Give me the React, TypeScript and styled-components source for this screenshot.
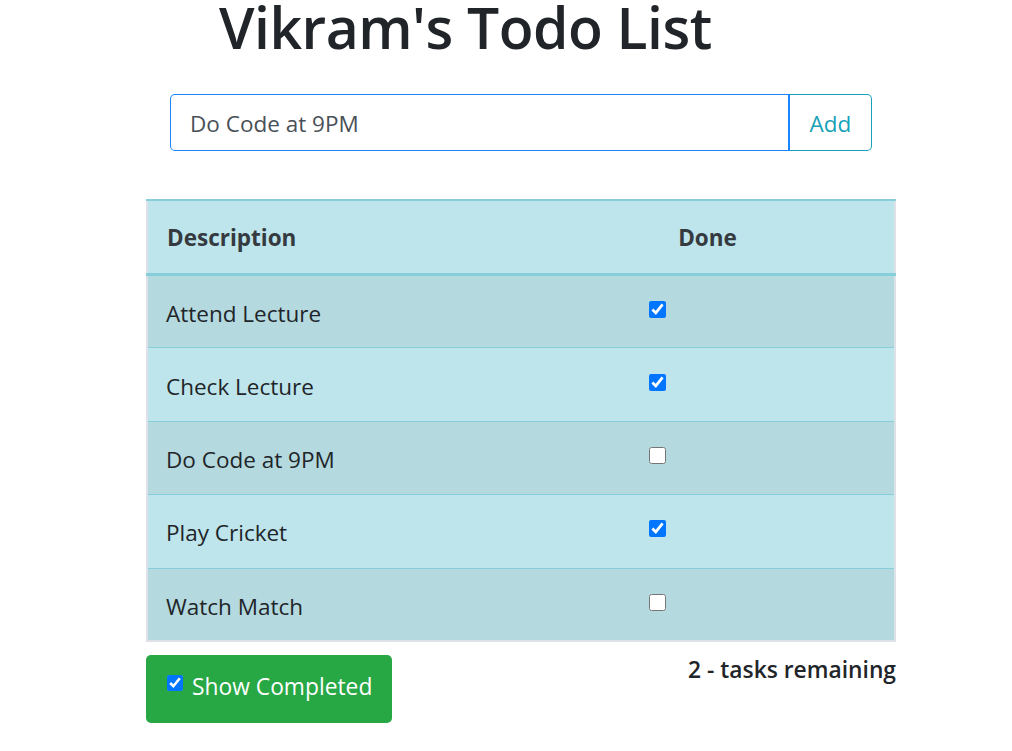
import React, { useState } from "react";
import styled, { createGlobalStyle } from "styled-components";

const Global = createGlobalStyle`
  html, body { margin: 0; padding: 0; background: #fff; }
  body { font-family: "Open Sans", "Noto Sans", sans-serif; color: #212529; font-size: 22.5px; line-height: 1.3; }
`;

const Page = styled.div`
  width: 750px;
  margin-left: 146px;
`;

const Title = styled.h1`
  margin: 0;
  padding-left: 73px;
  font-size: 57px;
  font-weight: 600;
  line-height: 54px;
  letter-spacing: -0.5px;
  color: #212529;
`;

const InputGroup = styled.div`
  display: flex;
  margin: 40px 24px 0;
  height: 57px;
`;

const TextInput = styled.input`
  flex: 1;
  box-sizing: border-box;
  height: 57px;
  border: 1px solid #1a85ff;
  border-right-width: 2px;
  border-radius: 5px 0 0 5px;
  padding: 2px 19px 0;
  font-family: inherit;
  font-size: 22.5px;
  color: #495057;
  outline: none;
`;

const AddButton = styled.button`
  width: 82px;
  height: 57px;
  box-sizing: border-box;
  border: 1px solid #17a2b8;
  border-left: none;
  border-radius: 0 5px 5px 0;
  padding: 2px 0 0;
  background: #fff;
  color: #17a2b8;
  font-family: inherit;
  font-size: 22.5px;
  cursor: pointer;
`;

const Table = styled.table`
  margin-top: 48px;
  width: 750px;
  border-collapse: collapse;
  table-layout: fixed;
  border-left: 2px solid #dee2e6;
  border-right: 2px solid #dee2e6;
  border-bottom: 2px solid #dee2e6;
`;

const Th = styled.th<{ $center?: boolean }>`
  background: #bee5eb;
  border-top: 2px solid #86cfda;
  border-bottom: 3px solid #86cfda;
  height: 72px;
  padding: 0 19px;
  line-height: 1.2;
  text-align: ${(p) => (p.$center ? "center" : "left")};
  font-size: 22.5px;
  font-weight: 700;
  color: #343a40;
`;

const Tr = styled.tr<{ $odd: boolean }>`
  background: ${(p) => (p.$odd ? "#b4d9df" : "#bee5eb")};
`;

const Td = styled.td`
  box-sizing: border-box;
  height: 73.4px;
  padding: 3px 18px 0;
  line-height: 1.2;
  border-top: 1px solid #86cfda;
  font-size: 22.5px;
  color: #212529;
  vertical-align: middle;
`;

const CheckCell = styled.td`
  box-sizing: border-box;
  height: 73.4px;
  padding: 0 0 0 128px;
  border-top: 1px solid #86cfda;
  vertical-align: middle;
`;

const Check = styled.input`
  width: 17px;
  height: 17px;
  margin: 0 0 5px;
  display: block;
`;

const Footer = styled.div`
  display: flex;
  justify-content: space-between;
  align-items: flex-start;
  margin-top: 13px;
`;

const GreenButton = styled.label`
  display: flex;
  align-items: center;
  gap: 9px;
  box-sizing: border-box;
  height: 68px;
  padding: 0 20px 6px 21px;
  background: #28a745;
  border-radius: 5px;
  color: #fff;
  font-size: 22.8px;
`;

const SmallCheck = styled.input`
  width: 16px;
  height: 16px;
  margin: 0 0 6px;
`;

const Remaining = styled.div`
  margin-top: 0;
  font-size: 22.8px;
  font-weight: 600;
  color: #212529;
`;

const items = [
  { d: "Attend Lecture", done: true },
  { d: "Check Lecture", done: true },
  { d: "Do Code at 9PM", done: false },
  { d: "Play Cricket", done: true },
  { d: "Watch Match", done: false },
];

export default function App() {
  const [todos, setTodos] = useState(items);
  const [text, setText] = useState("Do Code at 9PM");
  const [show, setShow] = useState(true);
  return (
    <Page>
      <Global />
      <Title>Vikram's Todo List</Title>
      <InputGroup>
        <TextInput value={text} onChange={(e) => setText(e.target.value)} />
        <AddButton>Add</AddButton>
      </InputGroup>
      <Table>
        <thead>
          <tr>
            <Th>Description</Th>
            <Th $center>Done</Th>
          </tr>
        </thead>
        <tbody>
          {todos.map((t, i) => (
            <Tr key={t.d} $odd={i % 2 === 0}>
              <Td>{t.d}</Td>
              <CheckCell>
                <Check
                  type="checkbox"
                  checked={t.done}
                  onChange={() =>
                    setTodos(todos.map((x, j) => (j === i ? { ...x, done: !x.done } : x)))
                  }
                />
              </CheckCell>
            </Tr>
          ))}
        </tbody>
      </Table>
      <Footer>
        <GreenButton>
          <SmallCheck type="checkbox" checked={show} onChange={() => setShow(!show)} />
          Show Completed
        </GreenButton>
        <Remaining>{todos.filter((t) => !t.done).length} - tasks remaining</Remaining>
      </Footer>
    </Page>
  );
}
